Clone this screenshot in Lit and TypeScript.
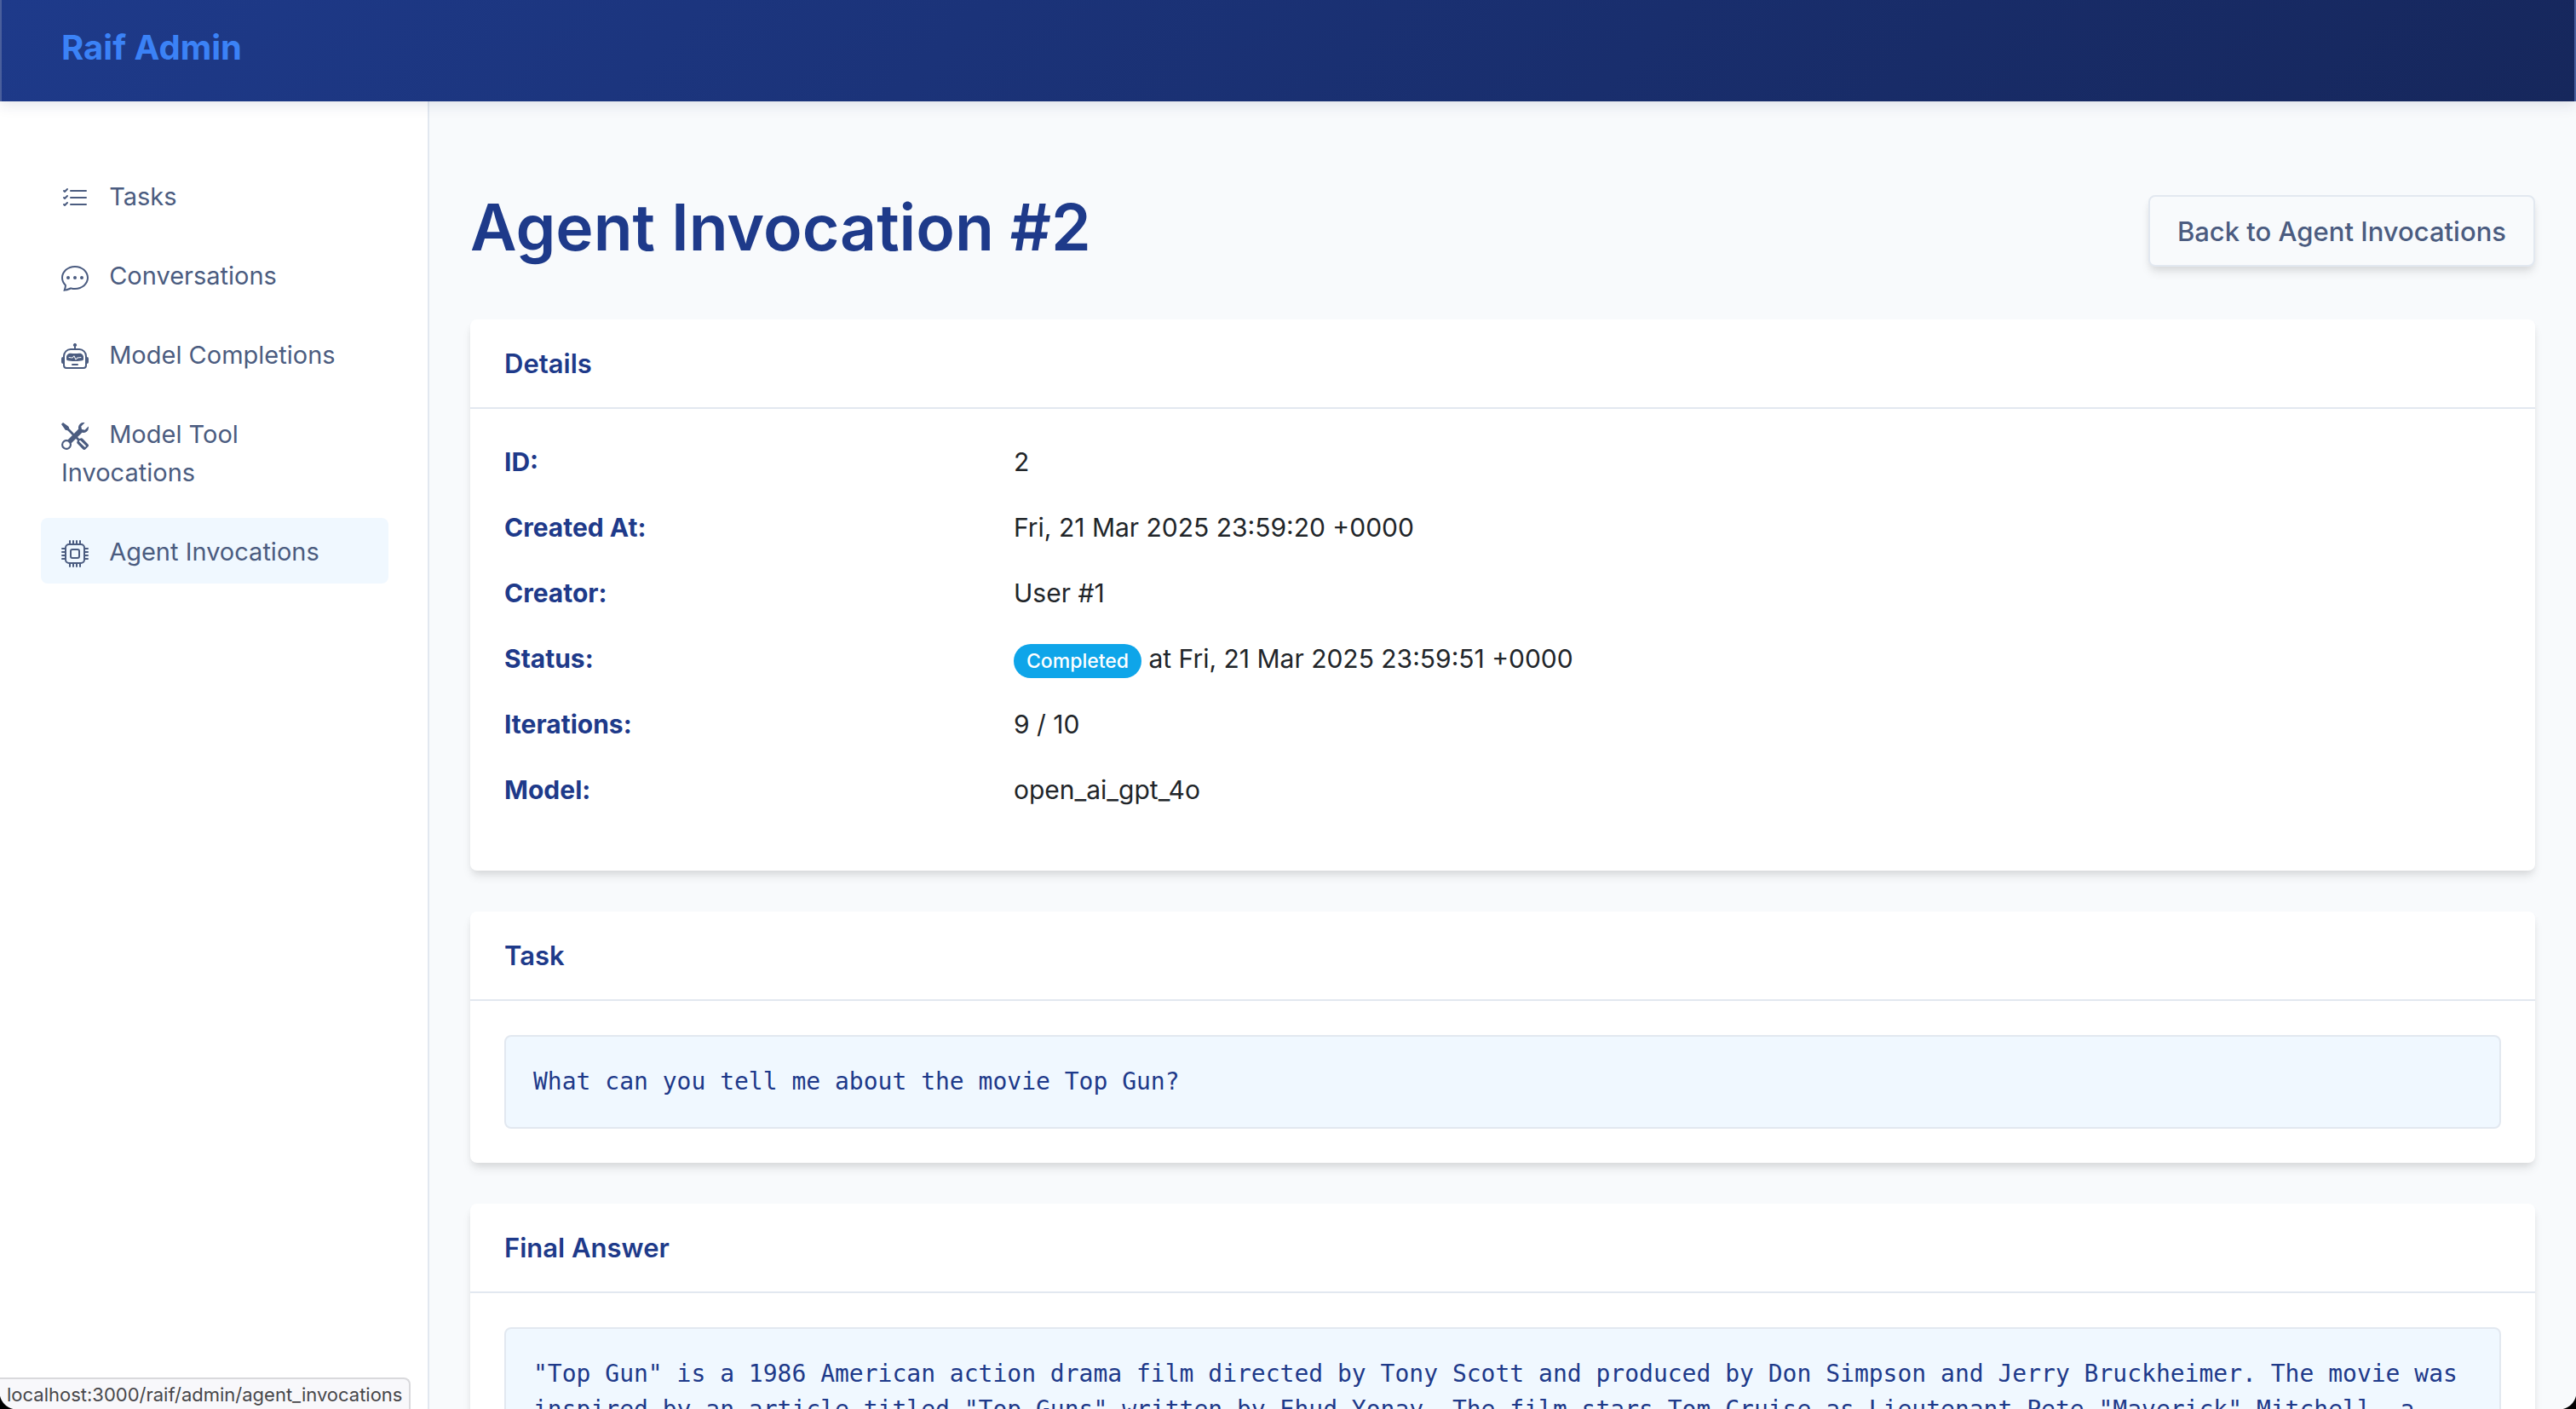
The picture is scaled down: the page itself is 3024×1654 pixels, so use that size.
import { LitElement, html, css, svg } from "lit";
import { customElement, state } from "lit/decorators.js";
import { classMap } from "lit/directives/class-map.js";

interface NavItem {
  label: string;
  href: string;
  icon: ReturnType<typeof svg>;
}

const listCheck = svg`<path fill-rule="evenodd" d="M5 11.5a.5.5 0 0 1 .5-.5h9a.5.5 0 0 1 0 1h-9a.5.5 0 0 1-.5-.5m0-4a.5.5 0 0 1 .5-.5h9a.5.5 0 0 1 0 1h-9a.5.5 0 0 1-.5-.5m0-4a.5.5 0 0 1 .5-.5h9a.5.5 0 0 1 0 1h-9a.5.5 0 0 1-.5-.5M3.854 2.146a.5.5 0 0 1 0 .708l-1.5 1.5a.5.5 0 0 1-.708 0l-.5-.5a.5.5 0 1 1 .708-.708L2 3.293l1.146-1.147a.5.5 0 0 1 .708 0m0 4a.5.5 0 0 1 0 .708l-1.5 1.5a.5.5 0 0 1-.708 0l-.5-.5a.5.5 0 1 1 .708-.708L2 7.293l1.146-1.147a.5.5 0 0 1 .708 0m0 4a.5.5 0 0 1 0 .708l-1.5 1.5a.5.5 0 0 1-.708 0l-.5-.5a.5.5 0 0 1 .708-.708l.146.147 1.146-1.147a.5.5 0 0 1 .708 0"/>`;

const chatDots = svg`<path d="M5 8a1 1 0 1 1-2 0 1 1 0 0 1 2 0m4 0a1 1 0 1 1-2 0 1 1 0 0 1 2 0m3 1a1 1 0 1 0 0-2 1 1 0 0 0 0 2"/><path d="m2.165 15.803.02-.004c1.83-.363 2.948-.842 3.468-1.105A9 9 0 0 0 8 15c4.418 0 8-3.134 8-7s-3.582-7-8-7-8 3.134-8 7c0 1.76.743 3.37 1.97 4.6a10.4 10.4 0 0 1-.524 2.318l-.003.011a11 11 0 0 1-.244.637c-.079.186.074.394.273.362a22 22 0 0 0 .693-.125m.8-3.108a1 1 0 0 0-.287-.801C1.618 10.83 1 9.468 1 8c0-3.192 3.004-6 7-6s7 2.808 7 6-3.004 6-7 6a8 8 0 0 1-2.088-.272 1 1 0 0 0-.711.074c-.387.196-1.24.57-2.634.893a11 11 0 0 0 .398-2"/>`;

const robot = svg`<path d="M6 12.5a.5.5 0 0 1 .5-.5h3a.5.5 0 0 1 0 1h-3a.5.5 0 0 1-.5-.5M3 8.062C3 6.76 4.235 5.765 5.53 5.886a26.6 26.6 0 0 0 4.94 0C11.765 5.765 13 6.76 13 8.062v1.157a.93.93 0 0 1-.765.935c-.845.147-2.34.346-4.235.346s-3.39-.2-4.235-.346A.93.93 0 0 1 3 9.219zm4.542-.827a.25.25 0 0 0-.217.068l-.92.9a25 25 0 0 1-1.871-.183.25.25 0 0 0-.068.495c.55.076 1.232.149 2.02.193a.25.25 0 0 0 .189-.071l.754-.736.847 1.71a.25.25 0 0 0 .404.062l.932-.97a25 25 0 0 0 1.922-.188.25.25 0 0 0-.068-.495c-.538.074-1.207.145-1.98.189a.25.25 0 0 0-.166.076l-.754.785-.842-1.7a.25.25 0 0 0-.182-.135"/><path d="M8.5 1.866a1 1 0 1 0-1 0V3h-2A4.5 4.5 0 0 0 1 7.5V8a1 1 0 0 0-1 1v2a1 1 0 0 0 1 1v1a2 2 0 0 0 2 2h10a2 2 0 0 0 2-2v-1a1 1 0 0 0 1-1V9a1 1 0 0 0-1-1v-.5A4.5 4.5 0 0 0 10.5 3h-2zM14 7.5V13a1 1 0 0 1-1 1H3a1 1 0 0 1-1-1V7.5A3.5 3.5 0 0 1 5.5 4h5A3.5 3.5 0 0 1 14 7.5"/>`;

const tools = svg`<path d="M1 0 0 1l2.2 3.081a1 1 0 0 0 .815.419h.07a1 1 0 0 1 .708.293l2.675 2.675-2.617 2.654A3.003 3.003 0 0 0 0 13a3 3 0 1 0 5.878-.851l2.654-2.617.968.968-.305.914a1 1 0 0 0 .242 1.023l3.27 3.27a.997.997 0 0 0 1.414 0l1.586-1.586a.997.997 0 0 0 0-1.414l-3.27-3.27a1 1 0 0 0-1.023-.242L10.5 9.5l-.96-.96 2.68-2.643A3.005 3.005 0 0 0 16 3q0-.405-.102-.777l-2.14 2.141L12 4l-.364-1.757L13.777.102a3 3 0 0 0-3.675 3.68L7.462 6.46 4.793 3.793a1 1 0 0 1-.293-.707v-.071a1 1 0 0 0-.419-.814zm9.646 10.646a.5.5 0 0 1 .708 0l2.914 2.915a.5.5 0 0 1-.707.707l-2.915-2.914a.5.5 0 0 1 0-.708M3 11l.471.242.529.026.287.445.445.287.026.529L5 13l-.242.471-.026.529-.445.287-.287.445-.529.026L3 15l-.471-.242L2 14.732l-.287-.445L1.268 14l-.026-.529L1 13l.242-.471.026-.529.445-.287.287-.445.529-.026z"/>`;

const cpu = svg`<path d="M5 0a.5.5 0 0 1 .5.5V2h1V.5a.5.5 0 0 1 1 0V2h1V.5a.5.5 0 0 1 1 0V2h1V.5a.5.5 0 0 1 1 0V2A2.5 2.5 0 0 1 14 4.5h1.5a.5.5 0 0 1 0 1H14v1h1.5a.5.5 0 0 1 0 1H14v1h1.5a.5.5 0 0 1 0 1H14v1h1.5a.5.5 0 0 1 0 1H14a2.5 2.5 0 0 1-2.5 2.5v1.5a.5.5 0 0 1-1 0V14h-1v1.5a.5.5 0 0 1-1 0V14h-1v1.5a.5.5 0 0 1-1 0V14h-1v1.5a.5.5 0 0 1-1 0V14A2.5 2.5 0 0 1 2 11.5H.5a.5.5 0 0 1 0-1H2v-1H.5a.5.5 0 0 1 0-1H2v-1H.5a.5.5 0 0 1 0-1H2v-1H.5a.5.5 0 0 1 0-1H2A2.5 2.5 0 0 1 4.5 2V.5A.5.5 0 0 1 5 0m-.5 3A1.5 1.5 0 0 0 3 4.5v7A1.5 1.5 0 0 0 4.5 13h7a1.5 1.5 0 0 0 1.5-1.5v-7A1.5 1.5 0 0 0 11.5 3zM5 6.5A1.5 1.5 0 0 1 6.5 5h3A1.5 1.5 0 0 1 11 6.5v3A1.5 1.5 0 0 1 9.5 11h-3A1.5 1.5 0 0 1 5 9.5zM6.5 6a.5.5 0 0 0-.5.5v3a.5.5 0 0 0 .5.5h3a.5.5 0 0 0 .5-.5v-3a.5.5 0 0 0-.5-.5z"/>`;

const NAV: NavItem[] = [
  { label: "Tasks", href: "/raif/admin/tasks", icon: listCheck },
  { label: "Conversations", href: "/raif/admin/conversations", icon: chatDots },
  { label: "Model Completions", href: "/raif/admin/model_completions", icon: robot },
  { label: "Model Tool Invocations", href: "/raif/admin/model_tool_invocations", icon: tools },
  { label: "Agent Invocations", href: "/raif/admin/agent_invocations", icon: cpu },
];

const ANSWER = `"Top Gun" is a 1986 American action drama film directed by Tony Scott and produced by Don Simpson and Jerry Bruckheimer. The movie was inspired by an article titled "Top Guns" written by Ehud Yonay. The film stars Tom Cruise as Lieutenant Pete "Maverick" Mitchell, a`;

@customElement("admin-card")
export class AdminCard extends LitElement {
  static properties = { heading: { type: String } };
  declare heading: string;

  static styles = css`
    :host {
      display: block;
      background: #fff;
      border-radius: 8px;
      box-shadow: 0 8px 12px -2px rgba(0, 0, 0, 0.1), 0 4px 8px -2px rgba(0, 0, 0, 0.06);
    }
    .heading {
      margin: 0;
      padding: 29px 40px 28px;
      border-bottom: 2px solid #e2e8f0;
      color: #1e3a8a;
      font-size: 31px;
      font-weight: 600;
      line-height: 46px;
    }
    .body {
      padding: 40px;
    }
  `;

  render() {
    return html`
      <h2 class="heading">${this.heading}</h2>
      <div class="body"><slot></slot></div>
    `;
  }
}

@customElement("app-root")
export class AppRoot extends LitElement {
  @state() private current = "Agent Invocations";

  static styles = css`
    :host {
      display: flex;
      flex-direction: column;
      height: 100vh;
      overflow: hidden;
      position: relative;
      background: #f8fafc;
      color: #212529;
      font-family: Inter, "Liberation Sans", sans-serif;
      font-size: 30px;
      line-height: 45px;
    }
    * {
      box-sizing: border-box;
    }
    .topbar {
      flex: none;
      position: relative;
      z-index: 1;
      padding: 26px 70px 33px;
      border: solid #4a5f9c;
      border-width: 0 2px;
      background: linear-gradient(135deg, #1e3a8a, #16275c);
      box-shadow: 0 4px 16px rgba(30, 41, 90, 0.12);
    }
    .brand {
      display: inline-block;
      color: #3b82f6;
      font-size: 40px;
      font-weight: 700;
      line-height: 60px;
      text-decoration: none;
    }
    .layout {
      flex: 1;
      min-height: 0;
      display: grid;
      grid-template-columns: 1fr 5fr;
    }
    .sidebar {
      padding: 72px 46px 48px 48px;
      background: #fff;
      border-right: 2px solid #e2e8f0;
      font-size: 29px;
    }
    .menu {
      display: flex;
      flex-direction: column;
      gap: 16px;
      margin: 0;
      padding: 0;
      list-style: none;
    }
    .link {
      display: block;
      padding: 17px 24px 15px;
      border-radius: 8px;
      color: #4b5c80;
      text-decoration: none;
    }
    .link.active {
      background: #f0f8ff;
    }
    .icon {
      width: 32px;
      height: 32px;
      margin-right: 16px;
      fill: currentColor;
      vertical-align: -8px;
    }
    .main {
      min-width: 0;
      overflow: hidden;
      display: flex;
      flex-direction: column;
      gap: 48px;
      padding: 104px 48px 0;
    }
    .title-row {
      display: flex;
      align-items: center;
      justify-content: space-between;
      padding-bottom: 8px;
    }
    .title {
      margin: 0;
      padding-bottom: 8px;
      color: #1e3a8a;
      font-size: 75px;
      font-weight: 600;
      line-height: 88px;
    }
    .back {
      padding: 18px 32px 17px;
      border: 2px solid #e2e8f0;
      border-radius: 8px;
      background: #f8fafc;
      color: #4b5c80;
      font-size: 31px;
      font-weight: 500;
      text-decoration: none;
      box-shadow: 0 8px 12px -2px rgba(0, 0, 0, 0.1), 0 4px 8px -2px rgba(0, 0, 0, 0.06);
    }
    .card {
      flex: none;
    }
    .details {
      margin: 0;
    }
    .row {
      display: grid;
      grid-template-columns: 1fr 3fr;
      gap: 16px;
      padding-bottom: 32px;
    }
    .term {
      color: #1e3a8a;
      font-weight: 700;
    }
    .value {
      margin: 0;
    }
    .badge {
      display: inline-block;
      padding: 8px 15px;
      border-radius: 20px;
      background: #0ea5e9;
      color: #fff;
      font-size: 23px;
      font-weight: 500;
      line-height: 24px;
    }
    .pre {
      margin: 0;
      padding: 32px;
      border: 2px solid #e2e8f0;
      border-radius: 8px;
      background: #f0f8ff;
      color: #1e3a8a;
      font-family: "DejaVu Sans Mono", monospace;
      font-size: 28px;
      line-height: 42px;
      white-space: pre-wrap;
    }
    .status {
      position: absolute;
      z-index: 2;
      left: 0;
      bottom: 0;
      padding: 3px 8px 2px;
      border: solid #d9d9dc;
      border-width: 2px 2px 0 0;
      border-radius: 0 8px 0 0;
      background: #f8f8fb;
      color: #47474a;
      font-size: 22px;
      line-height: 30px;
    }
    .corner {
      position: absolute;
      z-index: 3;
      bottom: 0;
      width: 20px;
      height: 20px;
    }
    .corner.left {
      left: 0;
      background: radial-gradient(circle at 100% 0, transparent 20px, #000 21px);
    }
    .corner.right {
      right: 0;
      background: radial-gradient(circle at 0 0, transparent 20px, #000 21px);
    }
  `;

  private renderLink(item: NavItem) {
    const active = item.label === this.current;
    return html`<li>
      <a class=${classMap({ link: true, active })} href=${item.href} aria-current=${active ? "page" : "false"}
        ><svg class="icon" viewBox="0 0 16 16" aria-hidden="true">${item.icon}</svg> ${item.label}</a>
    </li>`;
  }

  private renderRow(term: string, value: unknown) {
    return html`<div class="row">
      <dt class="term">${term}</dt>
      <dd class="value">${value}</dd>
    </div>`;
  }

  render() {
    return html`
      <header class="topbar"><a class="brand" href="/raif/admin">Raif Admin</a></header>
      <div class="layout">
        <nav class="sidebar">
          <ul class="menu">${NAV.map((item) => this.renderLink(item))}</ul>
        </nav>
        <main class="main">
          <div class="title-row">
            <h1 class="title">Agent Invocation #2</h1>
            <a class="back" href="/raif/admin/agent_invocations">Back to Agent Invocations</a>
          </div>
          <admin-card class="card" heading="Details">
            <dl class="details">
              ${this.renderRow("ID:", "2")}
              ${this.renderRow("Created At:", "Fri, 21 Mar 2025 23:59:20 +0000")}
              ${this.renderRow("Creator:", "User #1")}
              ${this.renderRow("Status:", html`<span class="badge">Completed</span> at Fri, 21 Mar 2025 23:59:51 +0000`)}
              ${this.renderRow("Iterations:", "9 / 10")}
              ${this.renderRow("Model:", "open_ai_gpt_4o")}
            </dl>
          </admin-card>
          <admin-card class="card" heading="Task">
            <pre class="pre">What can you tell me about the movie Top Gun?</pre>
          </admin-card>
          <admin-card class="card" heading="Final Answer">
            <pre class="pre">${ANSWER}</pre>
          </admin-card>
        </main>
      </div>
      <div class="status">localhost:3000/raif/admin/agent_invocations</div>
      <div class="corner left"></div>
      <div class="corner right"></div>
    `;
  }
}
